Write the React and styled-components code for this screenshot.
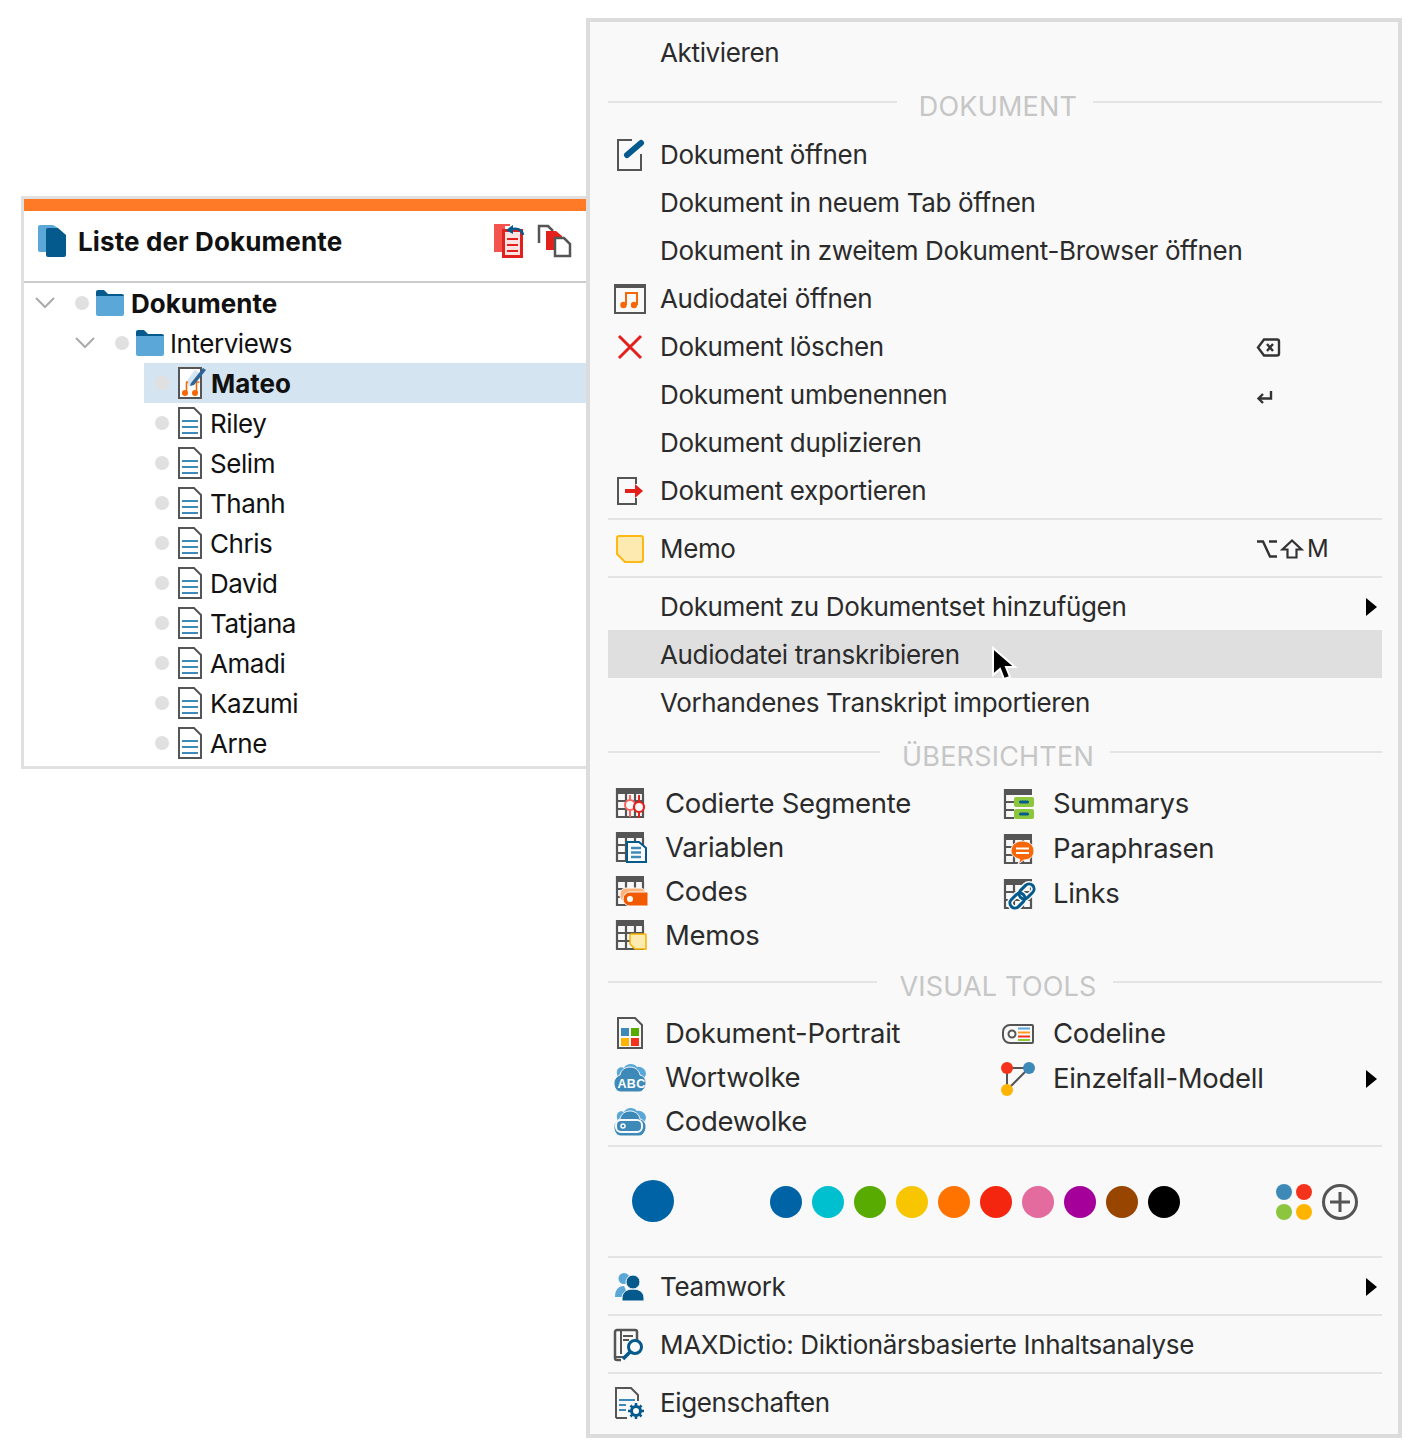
import React from 'react';
import styled, { createGlobalStyle } from 'styled-components';

const GlobalStyle = createGlobalStyle`
  html, body { margin: 0; padding: 0; background: #fff; }
  body { font-family: Inter, "Open Sans", "Liberation Sans", sans-serif; }
  svg { display: block; overflow: visible; }
`;

const GRAY = '#555';
const DARK = '#045a8c';
const BLUE = '#3d8ab8';
const LIGHT = '#5aa7d8';
const RED = '#e3201b';
const ORANGE = '#f76707';

/* ---------- icons ---------- */
const DocsIcon = () => (
  <svg width="28" height="32" viewBox="0 0 28 32">
    <path d="M0 2a2 2 0 0 1 2-2h13l5 3v24H2a2 2 0 0 1-2-2z" fill={LIGHT} />
    <path d="M8 5a2 2 0 0 1 2-2h10l8 7v20a2 2 0 0 1-2 2H10a2 2 0 0 1-2-2z" fill={DARK} />
  </svg>
);

const RestoreIcon = () => (
  <svg width="34" height="36" viewBox="0 0 34 36">
    <rect x="1" y="1" width="11" height="28" fill="#f5544e" />
    <rect x="10.500" y="7.500" width="18" height="26" fill="#fde3e1" stroke={RED} strokeWidth="3" />
    <path d="M14 16h11M14 22h11M14 28h11" stroke={RED} strokeWidth="2" />
    <path d="M12 2h5" stroke="#f5544e" strokeWidth="2" />
    <path d="M30 12c-1-5-5-7-11-6" fill="none" stroke={DARK} strokeWidth="2.500" />
    <path d="M13 7l7-5v9z" fill={DARK} />
  </svg>
);

const CopyIcon = () => (
  <svg width="33" height="32" viewBox="0 0 33 32">
    <path d="M1 18V1h9l5 5" fill="none" stroke={GRAY} strokeWidth="2.500" />
    <path d="M8 6h10l6 5v14H8z" fill={RED} />
    <path d="M17 31V13h9l6 6v12z" fill="#fff" stroke={GRAY} strokeWidth="2.500" />
  </svg>
);

const Chevron = () => (
  <svg width="20" height="12" viewBox="0 0 20 12">
    <path d="M1 1l9 9 9-9" fill="none" stroke="#aaa" strokeWidth="2" />
  </svg>
);

const FolderIcon = () => (
  <svg width="28" height="26" viewBox="0 0 28 26">
    <path d="M0 2a2 2 0 0 1 2-2h6l4 4h14a2 2 0 0 1 2 2v2H0z" fill={DARK} />
    <path d="M0 6h28v18a2 2 0 0 1-2 2H2a2 2 0 0 1-2-2z" fill={LIGHT} />
  </svg>
);

const LeafDoc = () => (
  <svg width="24" height="32" viewBox="0 0 24 32">
    <path d="M1 1h15l7 7v23H1z" fill="#fff" stroke={GRAY} strokeWidth="2" />
    <path d="M4 14h16M4 20h16M4 26h16" stroke={BLUE} strokeWidth="2" />
  </svg>
);

const EditedAudioDoc = () => (
  <svg width="28" height="32" viewBox="0 0 28 32">
    <path d="M1 1h22v30H1z" fill="#fff" stroke={GRAY} strokeWidth="2" />
    <path d="M8.500 26V15M18.500 26V15" stroke={ORANGE} strokeWidth="1.600" />
    <path d="M8 15h3.500M18 15h3.500" stroke={ORANGE} strokeWidth="1.600" />
    <circle cx="7" cy="26" r="3" fill={ORANGE} />
    <circle cx="17" cy="26" r="3" fill={ORANGE} />
    <path d="M10 12L17 3l7 4-9 11-5 1z" fill="#cfe2f3" opacity=".9" />
    <path d="M13 16L25 1l3 2-12 15-4 1z" fill="#2f6496" />
  </svg>
);

const OpenIcon = () => (
  <svg width="28" height="32" viewBox="-1 0 28 32">
    <path d="M15 1H1v30h23V15" fill="none" stroke={GRAY} strokeWidth="2" />
    <path d="M10 16L24 4" stroke={DARK} strokeWidth="6" strokeLinecap="round" />
  </svg>
);

const AudioIcon = () => (
  <svg width="32" height="30" viewBox="0 0 32 30">
    <rect x="1" y="1" width="30" height="28" fill="none" stroke={GRAY} strokeWidth="2" />
    <rect x="0" y="0" width="32" height="4" fill={GRAY} />
    <path d="M12 21V9h11v12" fill="none" stroke={ORANGE} strokeWidth="2" />
    <circle cx="9.500" cy="21" r="3.200" fill={ORANGE} />
    <circle cx="20" cy="21" r="3.200" fill={ORANGE} />
  </svg>
);

const DeleteIcon = () => (
  <svg width="24" height="24" viewBox="0 0 24 24">
    <path d="M1 1l22 22M23 1L1 23" stroke={RED} strokeWidth="3" />
  </svg>
);

const ExportIcon = () => (
  <svg width="26" height="28" viewBox="0 0 26 28">
    <path d="M19 7V1H1v26h18v-6" fill="none" stroke={GRAY} strokeWidth="2" />
    <path d="M8 12h10V7l8 7-8 7v-5H8z" fill={RED} />
  </svg>
);

const MemoIcon = () => (
  <svg width="28" height="28" viewBox="0 0 28 28">
    <path d="M3 1h22a2 2 0 0 1 2 2v22a2 2 0 0 1-2 2H9l-8-8V3a2 2 0 0 1 2-2z" fill="#fdeab0" stroke="#fdb813" strokeWidth="2" />
  </svg>
);

const TableBase = ({ children, rows = true }) => (
  <svg width="28" height="30" viewBox="0 0 28 30">
    <rect x="0" y="0" width="28" height="6" fill={GRAY} />
    {rows
      ? <path d="M1 0v30M10 6v24M19 6v24M27 6v24M0 13h28M0 21h28M0 29h28" stroke={GRAY} strokeWidth="2.200" fill="none" />
      : <path d="M1 0v30M0 13h10M0 21h10M0 29h10" stroke={GRAY} strokeWidth="2.200" fill="none" />}
    {children}
  </svg>
);

const SegmentsIcon = () => (
  <TableBase>
    <circle cx="14" cy="17" r="5" fill="#f9f9f9" stroke="#f5635c" strokeWidth="2" />
    <path d="M14 7v5M14 22v7" stroke="#f5635c" strokeWidth="2" />
    <circle cx="23" cy="19" r="5" fill="#f9f9f9" stroke={RED} strokeWidth="2.200" />
    <path d="M23 7v7M23 24v6" stroke={RED} strokeWidth="2" />
  </TableBase>
);

const VariablesIcon = () => (
  <TableBase>
    <path d="M10 10h12l7 6v14H10z" fill="#fff" stroke={DARK} strokeWidth="2" transform="translate(1 0)" />
    <path d="M15 16h10M15 20.500h10M15 25h10" stroke={BLUE} strokeWidth="2.500" />
  </TableBase>
);

const CodesIcon = () => (
  <TableBase>
    <rect x="4" y="12" width="26" height="14" rx="6" fill="#ffb37a" stroke="#f9f9f9" />
    <path d="M14 16h18v14H14a7 7 0 0 1-7-7 7 7 0 0 1 7-7z" fill="#f25a00" stroke="#f9f9f9" />
    <circle cx="14" cy="23" r="3" fill="#fff" />
  </TableBase>
);

const MemosTableIcon = () => (
  <TableBase>
    <path d="M15 14h14a1 1 0 0 1 1 1v14h-11l-5-5V15a1 1 0 0 1 1-1z" fill="#fdeab0" stroke="#f5b000" strokeWidth="1.500" />
  </TableBase>
);

const SummaryIcon = () => (
  <TableBase rows={false}>
    <rect x="10" y="8" width="20" height="10" rx="2" fill="#8cc63f" />
    <rect x="10" y="20" width="20" height="10" rx="2" fill="#8cc63f" />
    <rect x="15" y="11.500" width="10" height="3" rx="1.500" fill={DARK} />
    <rect x="15" y="23.500" width="10" height="3" rx="1.500" fill={DARK} />
  </TableBase>
);

const ParaphraseIcon = () => (
  <TableBase>
    <path d="M18 7c7 0 12 4 12 10s-5 9-10 9l-6 4 2-4.500C11 24 7 21 7 17c0-6 5-10 11-10z" fill={ORANGE} stroke="#f9f9f9" />
    <path d="M12 14.500h13M12 19h13" stroke="#fff" strokeWidth="2" />
  </TableBase>
);

const LinksIcon = () => (
  <TableBase>
    <g fill="none" transform="rotate(-45 18 17)">
      <rect x="3" y="12" width="17" height="10" rx="5" stroke="#f9f9f9" strokeWidth="6" />
      <rect x="16" y="12" width="17" height="10" rx="5" stroke="#f9f9f9" strokeWidth="6" />
      <rect x="3" y="12" width="17" height="10" rx="5" stroke={DARK} strokeWidth="3" />
      <rect x="16" y="12" width="17" height="10" rx="5" stroke={DARK} strokeWidth="3" />
    </g>
  </TableBase>
);

const PortraitIcon = () => (
  <svg width="26" height="32" viewBox="0 0 26 32">
    <path d="M1 1h17l7 7v23H1z" fill="none" stroke={GRAY} strokeWidth="2" />
    <rect x="4" y="11" width="8" height="8" fill={BLUE} />
    <rect x="14" y="11" width="8" height="8" fill="#58ab00" />
    <rect x="4" y="21" width="8" height="8" fill="#ffb400" />
    <rect x="14" y="21" width="8" height="8" fill="#f5331c" />
  </svg>
);

const CloudBack = () => (
  <path d="M3 12c-1-5 3-8 7-6 2-4 9-6 13-1 4-1 9 2 9 7l-2 5H4z" fill={LIGHT} />
);

const CloudFront = () => (
  <path d="M7 30C2 30 0 25 0 21c0-4 3-7 6-8 1-5 5-8 10-8s9 3 10 8c4 1 6 4 6 8 0 4-3 9-7 9z" fill={BLUE} stroke="#f9f9f9" />
);

const CloudText = styled.text`
  font-family: "Liberation Sans", sans-serif;
  font-size: 12.500px;
  font-weight: 700;
  fill: #fff;
  letter-spacing: 0.3px;
`;

const WordCloudIcon = () => (
  <svg width="32" height="30" viewBox="0 0 32 30">
    <CloudBack />
    <CloudFront />
    <CloudText x="3.500" y="26">ABC</CloudText>
  </svg>
);

const CodeCloudIcon = () => (
  <svg width="32" height="30" viewBox="0 0 32 30">
    <CloudBack />
    <CloudFront />
    <rect x="2" y="14" width="26" height="12" rx="5" fill="none" stroke="#f9f9f9" strokeWidth="2" />
    <circle cx="9" cy="20" r="2" fill="none" stroke="#f9f9f9" strokeWidth="1.500" />
  </svg>
);

const CodelineIcon = () => (
  <svg width="32" height="20" viewBox="0 0 32 20">
    <path d="M8 1h22a1 1 0 0 1 1 1v16a1 1 0 0 1-1 1H8a7 7 0 0 1-7-7V8a7 7 0 0 1 7-7z" fill="none" stroke={GRAY} strokeWidth="2" />
    <circle cx="10" cy="10" r="3.500" fill="none" stroke={GRAY} strokeWidth="2" />
    <path d="M16 4.500h12" stroke={LIGHT} strokeWidth="2" />
    <path d="M16 8.500h12" stroke="#ff9a1f" strokeWidth="2" />
    <path d="M16 12.500h12" stroke="#f5331c" strokeWidth="2" />
    <path d="M16 16h12" stroke="#8cc63f" strokeWidth="2" />
  </svg>
);

const ModelIcon = () => (
  <svg width="34" height="34" viewBox="0 0 34 34">
    <path d="M6 6h22L6 28z" fill="none" stroke={GRAY} strokeWidth="2" />
    <circle cx="6" cy="6" r="6" fill="#f5331c" />
    <circle cx="28" cy="6" r="6" fill={BLUE} />
    <circle cx="6" cy="28" r="6" fill="#ffb400" />
  </svg>
);

const PaletteIcon = () => (
  <svg width="36" height="36" viewBox="0 0 36 36">
    <circle cx="8" cy="8" r="8" fill={BLUE} />
    <circle cx="28" cy="8" r="8" fill="#f5331c" />
    <circle cx="8" cy="28" r="8" fill="#8cc63f" />
    <circle cx="28" cy="28" r="8" fill="#ffb400" />
  </svg>
);

const PlusIcon = () => (
  <svg width="36" height="36" viewBox="0 0 36 36">
    <circle cx="18" cy="18" r="16.500" fill="none" stroke={GRAY} strokeWidth="3" />
    <path d="M18 8v20M8 18h20" stroke={GRAY} strokeWidth="3" />
  </svg>
);

const TeamIcon = () => (
  <svg width="30" height="28" viewBox="0 0 30 28">
    <circle cx="9" cy="5.500" r="5.500" fill={LIGHT} />
    <path d="M0 24c0-7 3-11 9-11l5 11z" fill={LIGHT} />
    <path d="M7 28v-3c0-6 5-9 11-9s11 3 11 9v3z" fill={DARK} stroke="#f9f9f9" />
    <circle cx="18" cy="9" r="7" fill={DARK} stroke="#f9f9f9" />
  </svg>
);

const DictioIcon = () => (
  <svg width="32" height="32" viewBox="0 0 32 32">
    <path d="M7 31H3a2 2 0 0 1-2-2V3a2 2 0 0 1 2-2h18a2 2 0 0 1 2 2v9" fill="none" stroke={GRAY} strokeWidth="2.500" />
    <path d="M7 1v24M1 28h10" stroke={GRAY} strokeWidth="2" />
    <path d="M9 7h10M9 11h6" stroke={GRAY} strokeWidth="2" />
    <circle cx="21" cy="18" r="6.500" fill="#f9f9f9" stroke={DARK} strokeWidth="3" />
    <path d="M16 23l-7 7" stroke={DARK} strokeWidth="3.500" />
  </svg>
);

const PropertiesIcon = () => (
  <svg width="30" height="32" viewBox="0 0 30 32">
    <path d="M1 31V1h15l7 7v6" fill="none" stroke={GRAY} strokeWidth="2" />
    <path d="M1 31h11" stroke={GRAY} strokeWidth="2" />
    <path d="M4 13h16" stroke={BLUE} strokeWidth="2" />
    <path d="M4 18h7M4 23h7" stroke={BLUE} strokeWidth="2" />
    <circle cx="21" cy="24" r="4.500" fill="none" stroke={DARK} strokeWidth="3" />
    <path d="M21 16v16M13 24h16M15.500 18.500l11 11M26.500 18.500l-11 11" stroke={DARK} strokeWidth="2.500" strokeDasharray="3 10" />
  </svg>
);

const BackspaceGlyph = () => (
  <svg width="23" height="19" viewBox="0 0 23 19">
    <path d="M7 1.500h13a2 2 0 0 1 2 2v12a2 2 0 0 1-2 2H7l-6-8z" fill="none" stroke="#333" strokeWidth="2.400" />
    <path d="M10 6l6 7M16 6l-6 7" stroke="#333" strokeWidth="2.400" />
  </svg>
);

const ReturnGlyph = () => (
  <svg width="16" height="16" viewBox="0 -4 16 16">
    <path d="M14 0v7.500H2" fill="none" stroke="#333" strokeWidth="2.400" />
    <path d="M6 3L1.500 7.500 6 12" fill="none" stroke="#333" strokeWidth="2.400" />
  </svg>
);

const OptionGlyph = () => (
  <svg width="20" height="18" viewBox="0 0 20 18">
    <path d="M0 1.500h6L13 16.500h7M12 1.500h8" fill="none" stroke="#333" strokeWidth="2.400" />
  </svg>
);

const ShiftGlyph = () => (
  <svg width="22" height="20" viewBox="0 0 22 20">
    <path d="M11 1.500L1.500 10.500H6.500V18.500H15.500V10.500H20.500z" fill="none" stroke="#333" strokeWidth="2.200" />
  </svg>
);

const CursorGlyph = () => (
  <svg width="24" height="36" viewBox="0 0 24 36">
    <path d="M1 1v27l7-6 4 10 6-2-4-10h9z" fill="#000" stroke="#fff" strokeWidth="2" />
  </svg>
);

/* ---------- data ---------- */
const people = ['Riley', 'Selim', 'Thanh', 'Chris', 'David', 'Tatjana', 'Amadi', 'Kazumi', 'Arne'];
const swatches = ['#0063a6', '#00bfcf', '#58ab00', '#f7c600', '#ff7300', '#f5260f', '#e36b9d', '#a6009b', '#984500', '#000'];

const overviewLeft = [
  [SegmentsIcon, 'Codierte Segmente'],
  [VariablesIcon, 'Variablen'],
  [CodesIcon, 'Codes'],
  [MemosTableIcon, 'Memos'],
];
const overviewRight = [
  [SummaryIcon, 'Summarys'],
  [ParaphraseIcon, 'Paraphrasen'],
  [LinksIcon, 'Links'],
];
const visualLeft = [
  [PortraitIcon, 'Dokument-Portrait'],
  [WordCloudIcon, 'Wortwolke'],
  [CodeCloudIcon, 'Codewolke'],
];
const visualRight = [
  [CodelineIcon, 'Codeline'],
  [ModelIcon, 'Einzelfall-Modell', true],
];

const MenuRow = ({ icon: Icon, label, shortcut, submenu, active }) => (
  <Row $active={active}>
    <IconSlot>{Icon && <Icon />}</IconSlot>
    <span>{label}</span>
    <Shortcut>{shortcut}</Shortcut>
    {submenu && <Arrow />}
    {active && <Pointer><CursorGlyph /></Pointer>}
  </Row>
);

const ToolColumn = ({ items, pitch }) => (
  <ToolList>
    {items.map(([Icon, label, submenu]) => (
      <ToolRow key={label} $pitch={pitch}>
        <ToolIcon><Icon /></ToolIcon>
        <ToolLabel $raised={pitch === 45}>{label}</ToolLabel>
        {submenu && <ToolArrow />}
      </ToolRow>
    ))}
  </ToolList>
);

const App = () => {
  return (
    <Page>
      <GlobalStyle />
      <Panel>
        <AccentBar />
        <PanelHeader>
          <DocsIcon />
          <PanelTitle>Liste der Dokumente</PanelTitle>
          <HeaderActions>
            <RestoreIcon />
            <CopyIcon />
          </HeaderActions>
        </PanelHeader>
        <Tree>
          <TreeRow $level={0}>
            <Toggle><Chevron /></Toggle>
            <RowBody>
              <StatusDot />
              <FolderIcon />
              <Label $bold>Dokumente</Label>
            </RowBody>
          </TreeRow>
          <TreeRow $level={1}>
            <Toggle><Chevron /></Toggle>
            <RowBody>
              <StatusDot />
              <FolderIcon />
              <Label>Interviews</Label>
            </RowBody>
          </TreeRow>
          <TreeRow $level={2}>
            <Toggle />
            <RowBody $selected>
              <StatusDot />
              <DocSlot><EditedAudioDoc /></DocSlot>
              <Label $bold>Mateo</Label>
            </RowBody>
          </TreeRow>
          {people.map((name) => (
            <TreeRow key={name} $level={2}>
              <Toggle />
              <RowBody>
                <StatusDot />
                <DocSlot><LeafDoc /></DocSlot>
                <Label>{name}</Label>
              </RowBody>
            </TreeRow>
          ))}
        </Tree>
      </Panel>

      <Menu>
        <MenuRow label="Aktivieren" />
        <Heading><span>DOKUMENT</span></Heading>
        <MenuRow icon={OpenIcon} label="Dokument öffnen" />
        <MenuRow label="Dokument in neuem Tab öffnen" />
        <MenuRow label="Dokument in zweitem Dokument-Browser öffnen" />
        <MenuRow icon={AudioIcon} label="Audiodatei öffnen" />
        <MenuRow icon={DeleteIcon} label="Dokument löschen" shortcut={<BackspaceGlyph />} />
        <MenuRow label="Dokument umbenennen" shortcut={<ReturnGlyph />} />
        <MenuRow label="Dokument duplizieren" />
        <MenuRow icon={ExportIcon} label="Dokument exportieren" />
        <Divider />
        <MenuRow icon={MemoIcon} label="Memo" shortcut={<><OptionGlyph /><ShiftGlyph /><ShortcutKey>M</ShortcutKey></>} />
        <Divider />
        <MenuRow label="Dokument zu Dokumentset hinzufügen" submenu />
        <MenuRow label="Audiodatei transkribieren" active />
        <MenuRow label="Vorhandenes Transkript importieren" />
        <Heading><span>ÜBERSICHTEN</span></Heading>
        <ToolGrid>
          <ToolColumn items={overviewLeft} pitch={44} />
          <ToolColumn items={overviewRight} pitch={45} />
        </ToolGrid>
        <Heading><span>VISUAL TOOLS</span></Heading>
        <ToolGrid>
          <ToolColumn items={visualLeft} pitch={44} />
          <ToolColumn items={visualRight} pitch={45} />
        </ToolGrid>
        <ColorDivider />
        <ColorRow>
          <BigDot />
          <Swatches>
            {swatches.map((c) => <Swatch key={c} $color={c} />)}
          </Swatches>
          <ColorTools>
            <PaletteIcon />
            <PlusIcon />
          </ColorTools>
        </ColorRow>
        <ColorDivider $flush />
        <Spacer />
        <MenuRow icon={TeamIcon} label="Teamwork" submenu />
        <Divider />
        <MenuRow icon={DictioIcon} label="MAXDictio: Diktionärsbasierte Inhaltsanalyse" />
        <Divider />
        <MenuRow icon={PropertiesIcon} label="Eigenschaften" />
      </Menu>
    </Page>
  );
};

export default App;

const Page = styled.div`
  display: flex;
  align-items: flex-start;
  width: 1421px;
  height: 1456px;
  padding-left: 21px;
  box-sizing: border-box;
  color: #2b2b2b;
`;

const Panel = styled.div`
  width: 565px;
  height: 573px;
  margin-top: 196px;
  box-sizing: border-box;
  border: 3px solid #e0e0e0;
  border-right: 0;
  display: flex;
  flex-direction: column;
`;

const AccentBar = styled.div`
  height: 12px;
  background: #ff7a26;
`;

const PanelHeader = styled.div`
  height: 60px;
  display: flex;
  align-items: center;
  padding: 0 15px 10px 14px;
  border-bottom: 2px solid #ccc;
`;

const PanelTitle = styled.div`
  margin-left: 12px;
  font-size: 26px;
  font-weight: 700;
  color: #111;
  letter-spacing: 0.12px;
`;

const HeaderActions = styled.div`
  margin-left: auto;
  display: flex;
  align-items: center;
  gap: 11px;
`;

const Tree = styled.div`
  display: flex;
  flex-direction: column;
`;

const TreeRow = styled.div`
  display: flex;
  height: 40px;
  padding-left: ${(p) => p.$level * 40}px;
`;

const Toggle = styled.div`
  width: 40px;
  flex: none;
  display: flex;
  align-items: center;
  justify-content: center;
  padding-left: 2px;
  box-sizing: border-box;
`;

const RowBody = styled.div`
  flex: 1;
  display: flex;
  align-items: center;
  padding-left: 11px;
  gap: 7px;
  background: ${(p) => (p.$selected ? '#d4e4f1' : 'transparent')};
`;

const StatusDot = styled.div`
  width: 14px;
  height: 14px;
  border-radius: 50%;
  background: #e0e0e0;
  flex: none;
`;

const DocSlot = styled.div`
  width: 28px;
  flex: none;
  display: flex;
  padding-left: 2px;
  box-sizing: border-box;
`;

const Label = styled.span`
  font-size: 26px;
  color: #111;
  font-weight: ${(p) => (p.$bold ? 700 : 400)};
  letter-spacing: ${(p) => (p.$bold ? '0' : '-0.45px')};
  margin-left: ${(p) => (p.$bold ? '0' : '-1px')};
`;

const Menu = styled.div`
  width: 816px;
  height: 1420px;
  margin-top: 18px;
  box-sizing: border-box;
  border: 4px solid #dcdcdc;
  background: #f9f9f9;
  padding: 7px 16px 6px 18px;
  display: flex;
  flex-direction: column;
  font-size: 26px;
`;

const Row = styled.div`
  position: relative;
  height: 48px;
  flex: none;
  display: grid;
  grid-template-columns: 44px 605px 1fr 16px;
  align-items: center;
  background: ${(p) => (p.$active ? '#dfdfdf' : 'transparent')};
  margin: ${(p) => (p.$active ? '-1px 0 1px' : '0')};

  & > span {
    margin-left: 8px;
    padding-bottom: ${(p) => (p.$active ? '0' : '2px')};
    letter-spacing: -0.36px;
    white-space: nowrap;
  }
`;

const IconSlot = styled.div`
  display: flex;
  align-items: center;
  justify-content: center;
`;

const Shortcut = styled.div`
  display: flex;
  align-items: center;
  gap: 4px;
`;

const ShortcutKey = styled.span`
  font-size: 24px;
  line-height: 1;
`;

const Arrow = styled.div`
  grid-column: 4;
  width: 0;
  height: 0;
  border-style: solid;
  border-width: 9px 0 9px 11px;
  border-color: transparent transparent transparent #000;
`;

const Pointer = styled.div`
  position: absolute;
  left: 384px;
  top: 17px;
`;

const Heading = styled.div`
  height: 54px;
  flex: none;
  display: flex;
  align-items: center;
  gap: 20px;
  color: #c6c6c6;
  font-size: 27px;

  & > span {
    padding-top: 5px;
    margin: 0 -2px 0 2px;
    letter-spacing: 0.2px;
    white-space: nowrap;
  }

  &::before, &::after {
    content: '';
    flex: 1;
    height: 2px;
    background: #e4e4e4;
    margin-top: -5px;
  }

  &::after { margin-left: -2px; }
`;

const Divider = styled.div`
  height: 2px;
  flex: none;
  margin: 3px 0 5px;
  background: #e4e4e4;
`;

const ColorDivider = styled.div`
  height: 2px;
  flex: none;
  margin-top: ${(p) => (p.$flush ? '0' : '2px')};
  background: #e4e4e4;
`;

const Spacer = styled.div`
  height: 5px;
  flex: none;
`;

const ToolGrid = styled.div`
  display: grid;
  grid-template-columns: 388px 1fr;
  flex: none;
`;

const ToolList = styled.div`
  display: flex;
  flex-direction: column;
`;

const ToolRow = styled.div`
  height: ${(p) => p.$pitch}px;
  display: flex;
  align-items: center;
  font-size: 27.500px;
  letter-spacing: -0.3px;
`;

const ToolLabel = styled.span`
  padding-bottom: ${(p) => (p.$raised ? '2px' : '0')};
`;

const ToolIcon = styled.div`
  width: 44px;
  margin-right: 13px;
  display: flex;
  justify-content: center;
  flex: none;
`;

const ToolArrow = styled.div`
  margin-left: auto;
  margin-right: 5px;
  width: 0;
  height: 0;
  border-style: solid;
  border-width: 9px 0 9px 11px;
  border-color: transparent transparent transparent #000;
`;

const ColorRow = styled.div`
  height: 107px;
  padding: 0 24px 2px;
  flex: none;
  display: flex;
  align-items: center;
`;

const BigDot = styled.div`
  width: 42px;
  height: 42px;
  border-radius: 50%;
  background: #0063a6;
  flex: none;
`;

const Swatches = styled.div`
  display: flex;
  gap: 10px;
  margin-left: 96px;
  padding-top: 2px;
`;

const Swatch = styled.div`
  width: 32px;
  height: 32px;
  border-radius: 50%;
  background: ${(p) => p.$color};
`;

const ColorTools = styled.div`
  margin-left: auto;
  display: flex;
  align-items: center;
  gap: 10px;
  padding-top: 2px;
`;
